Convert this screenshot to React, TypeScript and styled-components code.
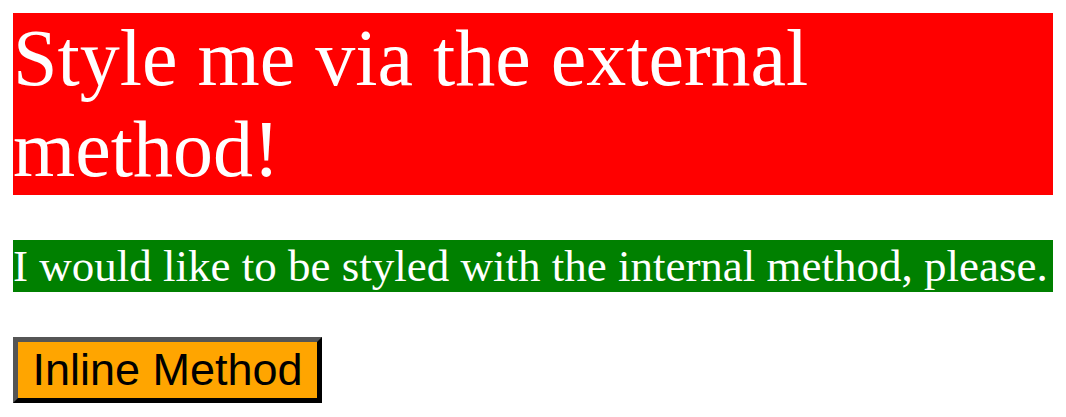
import React from "react";
import styled, { createGlobalStyle } from "styled-components";

const Global = createGlobalStyle`
  html, body { background: #fff; }
  body {
    margin: 13px;
    font-family: "Liberation Serif", "Times New Roman", serif;
  }
`;

const Heading = styled.h1`
  margin: 0 0 45px 0;
  background: #ff0000;
  color: #fff;
  font-family: "Liberation Serif", "Times New Roman", serif;
  font-weight: 400;
  font-size: 80px;
  line-height: 91px;
`;

const Paragraph = styled.p`
  margin: 45px 0;
  background: #008000;
  color: #fff;
  font-family: "Liberation Serif", "Times New Roman", serif;
  font-size: 45px;
  line-height: 52px;
`;

const InlineButton = styled.button`
  display: inline-block;
  box-sizing: border-box;
  height: 66px;
  width: 309px;
  margin: 0;
  padding: 0 12px;
  background: #ffa500;
  color: #000;
  font-family: "Liberation Sans", Arial, sans-serif;
  font-size: 45px;
  line-height: 52px;
  border-style: solid;
  border-width: 5px;
  border-color: #555555 #000000 #000000 #555555;
  cursor: pointer;
`;

export default function App() {
  return (
    <>
      <Global />
      <Heading>Style me via the external method!</Heading>
      <Paragraph>I would like to be styled with the internal method, please.</Paragraph>
      <InlineButton>Inline Method</InlineButton>
    </>
  );
}
